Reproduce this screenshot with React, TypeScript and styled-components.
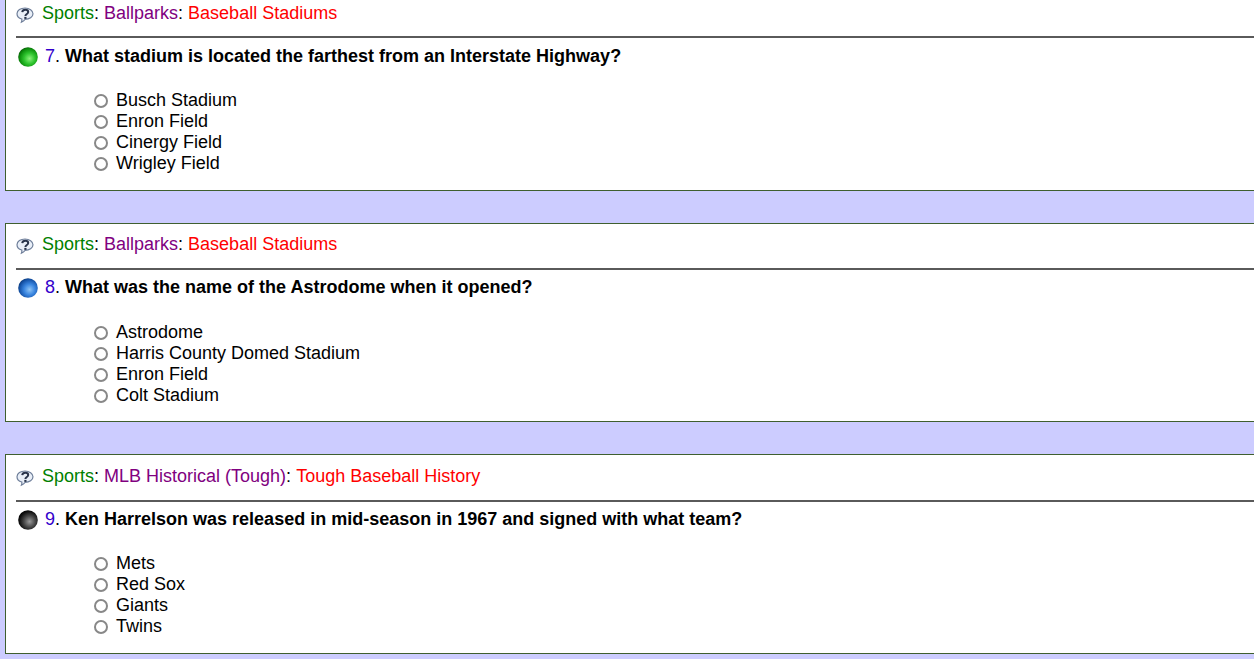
import styled, { createGlobalStyle } from "styled-components";

// the source page has fractional line heights, so each card rounds a bit differently
const quiz = [
  {
    num: 7,
    ball: "green",
    path: ["Ballparks", "Baseball Stadiums"],
    question: "What stadium is located the farthest from an Interstate Highway?",
    answers: ["Busch Stadium", "Enron Field", "Cinergy Field", "Wrigley Field"],
    head: 43,
    top: 10,
    qGap: 8,
    aGap: 24,
    height: 197,
  },
  {
    num: 8,
    ball: "blue",
    path: ["Ballparks", "Baseball Stadiums"],
    question: "What was the name of the Astrodome when it opened?",
    answers: ["Astrodome", "Harris County Domed Stadium", "Enron Field", "Colt Stadium"],
    head: 44,
    top: 10,
    qGap: 7,
    aGap: 25,
    height: 197,
  },
  {
    num: 9,
    ball: "black",
    path: ["MLB Historical (Tough)", "Tough Baseball History"],
    question: "Ken Harrelson was released in mid-season in 1967 and signed with what team?",
    answers: ["Mets", "Red Sox", "Giants", "Twins"],
    head: 45,
    top: 11,
    qGap: 7,
    aGap: 24,
    height: 198,
  },
];

const ballColors: Record<string, [string, string, string, string]> = {
  green: ["#8cf07c", "#2ec42e", "#0c8c0c", "#0a5a0a"],
  blue: ["#8fc4f5", "#3a86e0", "#1553a8", "#0e3a78"],
  black: ["#9a9a9a", "#4a4a4a", "#101010", "#000000"],
};

function HelpIcon() {
  return (
    <svg width="18" height="17" viewBox="0 0 18 17">
      <path
        d="M9 1C4.700 1 1 3.400 1 6.700c0 2.500 2 4.500 4.800 5.300.2.900.1 1.900-.4 3.200 1.700-.6 3-1.600 3.800-2.900H9c4.400 0 8-2.400 8-5.600S13.400 1 9 1z"
        fill="#e9eff8"
        stroke="#6f7f9a"
        strokeWidth="1.200"
      />
      <path
        d="M6.200 5.200C6.500 3.500 7.700 2.700 9.200 2.700c1.800 0 3 .9 3 2.300 0 1.200-.8 1.700-1.700 2.300-.7.500-1.100.9-1.100 1.600"
        fill="none"
        stroke="#28334a"
        strokeWidth="2"
      />
      <rect x="8.300" y="9.900" width="2.200" height="2" fill="#28334a" />
    </svg>
  );
}

function Ball({ color }: { color: string }) {
  const [hi, mid, dark, low] = ballColors[color];
  const id = `ball-${color}`;
  return (
    <svg width="20" height="20" viewBox="0 0 20 20">
      <defs>
        <radialGradient id={id} cx="0.58" cy="0.58" r="0.62">
          <stop offset="0" stopColor={hi} />
          <stop offset="0.45" stopColor={mid} />
          <stop offset="0.82" stopColor={dark} />
          <stop offset="1" stopColor={low} />
        </radialGradient>
      </defs>
      <circle cx="10" cy="10" r="9.800" fill={`url(#${id})`} />
    </svg>
  );
}

export default function App() {
  return (
    <>
      <GlobalStyle />
      <Page>
        {quiz.map((q) => (
          <Card key={q.num} $height={q.height}>
            <Category $height={q.head} $top={q.top}>
              <HelpSlot>
                <HelpIcon />
              </HelpSlot>
              <Sport>Sports</Sport>: <Topic>{q.path[0]}</Topic>: <Sub>{q.path[1]}</Sub>
            </Category>
            <Rule />
            <Question $gap={q.qGap}>
              <BallSlot>
                <Ball color={q.ball} />
              </BallSlot>
              <Num>{q.num}</Num>. <b>{q.question}</b>
            </Question>
            <Answers $gap={q.aGap}>
              {q.answers.map((a) => (
                <Answer key={a}>
                  <Radio type="radio" name={`q${q.num}`} />
                  {a}
                </Answer>
              ))}
            </Answers>
          </Card>
        ))}
      </Page>
    </>
  );
}

const GlobalStyle = createGlobalStyle`
  html, body {
    margin: 0;
    height: 659px;
    overflow: hidden;
    background: #ccccff;
  }
`;

const Page = styled.div`
  width: 1400px;
  margin-top: -8px;
  padding-left: 5px;
  display: flex;
  flex-direction: column;
  gap: 32px;
  font-family: "Liberation Sans", Arial, sans-serif;
  font-size: 18px;
  color: #000;
`;

const Card = styled.div<{ $height: number }>`
  height: ${(p) => p.$height}px;
  background: #fff;
  border: 1px solid #3f5f2f;
  padding-left: 10px;
`;

const Category = styled.div<{ $height: number; $top: number }>`
  box-sizing: border-box;
  display: flex;
  align-items: flex-start;
  white-space: pre;
  height: ${(p) => p.$height}px;
  padding-top: ${(p) => p.$top}px;
`;

const HelpSlot = styled.span`
  width: 26px;
  padding-top: 4px;
  display: flex;
`;

const Sport = styled.span`
  color: #008000;
`;

const Topic = styled.span`
  color: #800080;
`;

const Sub = styled.span`
  color: #ff0000;
`;

const Rule = styled.div`
  height: 2px;
  background: #5a5a5a;
`;

const Question = styled.div<{ $gap: number }>`
  display: flex;
  align-items: center;
  white-space: pre;
  height: 20px;
  margin-top: ${(p) => p.$gap}px;
  padding-left: 2px;
`;

const BallSlot = styled.span`
  width: 27px;
  display: flex;
  padding-top: 2px;
`;

const Num = styled.span`
  color: #3300cc;
`;

const Answers = styled.div<{ $gap: number }>`
  margin-top: ${(p) => p.$gap}px;
  padding-left: 78px;
`;

const Answer = styled.label`
  display: flex;
  align-items: center;
  height: 21px;
`;

const Radio = styled.input`
  appearance: none;
  box-sizing: border-box;
  width: 14px;
  height: 14px;
  margin: 0 8px 0 0;
  border: 2px solid #888;
  border-radius: 50%;
  background: #fff;
`;
